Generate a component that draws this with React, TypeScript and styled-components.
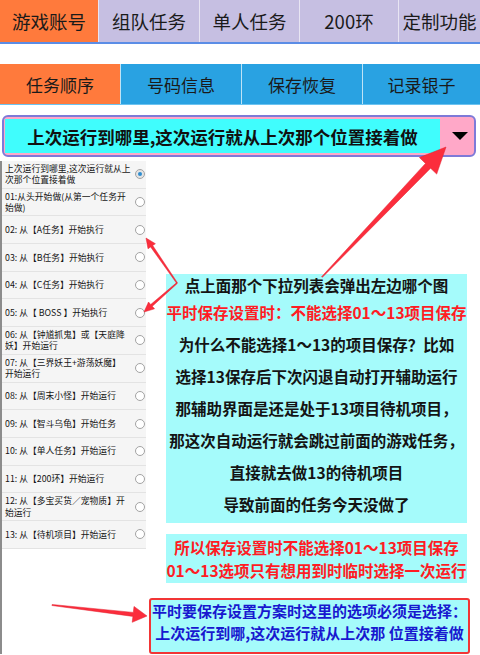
import React from "react";
import styled, { createGlobalStyle } from "styled-components";

const GlobalStyle = createGlobalStyle`
	html, body {
		margin: 0;
		padding: 0;
		background: #ffffff;
	}

	body {
		font-family: "Noto Sans CJK SC", "Noto Sans", sans-serif;
		color: #1f1f1f;
	}
`;

const Page = styled.div`
	position: relative;
	width: 480px;
	overflow: hidden;
`;

const TopTabs = styled.div`
	display: flex;
	height: 42px;
	border-bottom: 2px solid #5b8de6;
	overflow: hidden;
`;

const TopTab = styled.div<{ $active?: boolean; $width?: number }>`
	flex: ${({ $width }) => ($width ? `0 0 ${$width}px` : "1 1 auto")};
	display: flex;
	align-items: center;
	justify-content: center;
	font-size: 18.5px;
	color: #1a1a1a;
	background: ${({ $active }) => ($active ? "#ff7a3c" : "#c6bfe2")};

	& + & {
		border-left: 1px solid rgba(255, 255, 255, 0.6);
	}
`;

const SubTabs = styled.div`
	display: grid;
	grid-template-columns: 120px 121px 121px 1fr;
	height: 40px;
	margin-top: 20px;
	border-bottom: 1px solid #6cc3f0;
`;

const SubTab = styled.div<{ $active?: boolean }>`
	display: flex;
	align-items: center;
	justify-content: center;
	font-size: 17px;
	color: #1a1a1a;
	background: ${({ $active }) => ($active ? "#ff7a3c" : "#29a2e2")};

	& + & {
		border-left: 1px solid rgba(255, 255, 255, 0.7);
	}
`;

const Select = styled.div`
	display: flex;
	height: 34px;
	margin: 10px 4px 0 2px;
	padding: 2px 0 2px 1px;
	border: 2px solid #7e7ad8;
	border-radius: 6px;
	background: #ffa8c8;
`;

const SelectValue = styled.div`
	flex: 0 0 435px;
	display: flex;
	align-items: center;
	justify-content: center;
	background: #40fdfd;
	font-size: 17.5px;
	font-weight: bold;
	color: #111111;
	white-space: nowrap;
`;

const Caret = styled.div`
	flex: 1;
	display: flex;
	align-items: center;
	justify-content: center;
	padding-left: 5px;

	&::after {
		content: "";
		border-left: 8px solid transparent;
		border-right: 8px solid transparent;
		border-top: 8px solid #000000;
	}
`;

const Content = styled.div`
	display: flex;
	margin-top: 4px;
	border-left: 2px solid #8c8c8c;
`;

const OptionList = styled.div`
	flex: 0 0 143px;
	align-self: flex-start;
`;

const OptionRow = styled.div`
	display: flex;
	align-items: center;
	min-height: 26.7px;
	padding: 0 1px 0 3px;
	background: #f5f5f5;
	border-bottom: 1px solid #e3e3e3;
`;

const OptionText = styled.div`
	flex: 0 0 127px;
	font-size: 8.8px;
	line-height: 11.5px;
	color: #161616;
	white-space: pre-line;
	padding: 1px 0;
`;

const Radio = styled.span<{ $checked?: boolean }>`
	position: relative;
	flex: 0 0 auto;
	width: 8px;
	height: 8px;
	margin-left: 3px;
	border: 1px solid #a3a3a3;
	border-radius: 50%;
	background: ${({ $checked }) => ($checked ? "#e4e4e4" : "#ffffff")};

	&::after {
		content: "";
		display: ${({ $checked }) => ($checked ? "block" : "none")};
		position: absolute;
		top: 2px;
		left: 2px;
		width: 4px;
		height: 4px;
		border-radius: 50%;
		background: #2f8dcf;
	}
`;

const Aside = styled.div`
	flex: 1;
	display: flex;
	flex-direction: column;
	padding-top: 113px;
`;

const InfoBox = styled.div<{ $first?: boolean }>`
	margin: ${({ $first }) => ($first ? "0" : "11px")} 13px 0 20px;
	padding: ${({ $first }) => ($first ? "0 0 3px" : "1.5px 0")};
	background: #a5fbfb;
`;

const InfoLine = styled.div<{ $red?: boolean; $tight?: boolean }>`
	font-size: 15.5px;
	font-weight: bold;
	line-height: ${({ $tight }) => ($tight ? "23px" : "32px")};
	text-align: center;
	white-space: nowrap;
	color: ${({ $red }) => ($red ? "#ff1c24" : "#141414")};

	&:first-child {
		line-height: ${({ $tight }) => ($tight ? "23px" : "22px")};
	}
`;

const NoteBox = styled.div`
	margin: 15px 10px 0 3px;
	padding: 0 0 8px;
	border: 2px solid #f23535;
	border-radius: 3px;
	background: #a5fbfb;
`;

const NoteLine = styled.div`
	font-size: 15px;
	font-weight: bold;
	line-height: 22px;
	text-align: center;
	white-space: nowrap;
	color: #1818cf;
`;

const Overlay = styled.svg`
	position: absolute;
	top: 0;
	left: 0;
	pointer-events: none;
`;

const topTabs = [
	{ label: "游戏账号", width: 98, active: true },
	{ label: "组队任务", width: 100 },
	{ label: "单人任务", width: 99 },
	{ label: "200环", width: 98 },
	{ label: "定制功能" },
];

const subTabs = ["任务顺序", "号码信息", "保存恢复", "记录银子"];

const options = [
	"上次运行到哪里,这次运行就从上\n次那个位置接着做",
	"01:从头开始做(从第一个任务开\n始做)",
	"02: 从【A任务】开始执行",
	"03: 从【B任务】开始执行",
	"04: 从【C任务】开始执行",
	"05: 从【 BOSS 】开始执行",
	"06: 从【钟馗抓鬼】或【天庭降\n妖】开始运行",
	"07: 从【三界妖王+游荡妖魔】\n开始运行",
	"08: 从【周末小怪】开始运行",
	"09: 从【智斗乌龟】开始任务",
	"10: 从【单人任务】开始运行",
	"11: 从【200环】开始运行",
	"12: 从【多宝买货／宠物质】开\n始运行",
	"13: 从【待机项目】开始运行",
];

const explain = [
	{ text: "点上面那个下拉列表会弹出左边哪个图" },
	{ text: "平时保存设置时：不能选择01～13项目保存", red: true },
	{ text: "为什么不能选择1～13的项目保存？比如" },
	{ text: "选择13保存后下次闪退自动打开辅助运行" },
	{ text: "那辅助界面是还是处于13项目待机项目，" },
	{ text: "那这次自动运行就会跳过前面的游戏任务，" },
	{ text: "直接就去做13的待机项目" },
	{ text: "导致前面的任务今天没做了" },
];

// tapered arrow: thin tail, wider shaft near the head, triangular head
const arrow = (
	x1: number,
	y1: number,
	x2: number,
	y2: number,
	tailW: number,
	shaftW: number,
	headLen: number,
	headHalf: number
) => {
	const len = Math.hypot(x2 - x1, y2 - y1);
	const ux = (x2 - x1) / len;
	const uy = (y2 - y1) / len;
	const px = -uy;
	const py = ux;
	const bx = x2 - ux * headLen;
	const by = y2 - uy * headLen;
	const pts = [
		[x1 + (px * tailW) / 2, y1 + (py * tailW) / 2],
		[bx + (px * shaftW) / 2, by + (py * shaftW) / 2],
		[bx + px * headHalf, by + py * headHalf],
		[x2, y2],
		[bx - px * headHalf, by - py * headHalf],
		[bx - (px * shaftW) / 2, by - (py * shaftW) / 2],
		[x1 - (px * tailW) / 2, y1 - (py * tailW) / 2],
	];
	return pts.map((p) => `${p[0].toFixed(1)},${p[1].toFixed(1)}`).join(" ");
};

const arrows = [
	arrow(322, 277, 446, 147, 1, 7, 26, 12),
	arrow(177, 283, 146, 238, 1, 2.5, 10, 4.5),
	arrow(177, 283, 144, 312, 1, 2.5, 10, 4.5),
	arrow(52, 605, 147, 616, 1, 4, 14, 8),
];

const App = () => {
	return (
		<Page>
			<GlobalStyle />
			<TopTabs>
				{topTabs.map((t) => (
					<TopTab key={t.label} $active={t.active} $width={t.width}>
						{t.label}
					</TopTab>
				))}
			</TopTabs>

			<SubTabs>
				{subTabs.map((t, i) => (
					<SubTab key={t} $active={i === 0}>
						{t}
					</SubTab>
				))}
			</SubTabs>

			<Select>
				<SelectValue>上次运行到哪里,这次运行就从上次那个位置接着做</SelectValue>
				<Caret />
			</Select>

			<Content>
				<OptionList>
					{options.map((o, i) => (
						<OptionRow key={i}>
							<OptionText>{o}</OptionText>
							<Radio $checked={i === 0} />
						</OptionRow>
					))}
				</OptionList>

				<Aside>
					<InfoBox $first>
						{explain.map((l) => (
							<InfoLine key={l.text} $red={l.red}>
								{l.text}
							</InfoLine>
						))}
					</InfoBox>
					<InfoBox>
						<InfoLine $red $tight>
							所以保存设置时不能选择01～13项目保存
						</InfoLine>
						<InfoLine $red $tight>
							01～13选项只有想用到时临时选择一次运行
						</InfoLine>
					</InfoBox>
					<NoteBox>
						<NoteLine>平时要保存设置方案时这里的选项必须是选择：</NoteLine>
						<NoteLine>上次运行到哪,这次运行就从上次那 位置接着做</NoteLine>
					</NoteBox>
				</Aside>
			</Content>

			<Overlay width="480" height="655" viewBox="0 0 480 655">
				{arrows.map((pts, i) => (
					<polygon key={i} points={pts} fill="#fb2d3c" stroke="#e3202f" strokeWidth="0.5" />
				))}
			</Overlay>
		</Page>
	);
};

export default App;
